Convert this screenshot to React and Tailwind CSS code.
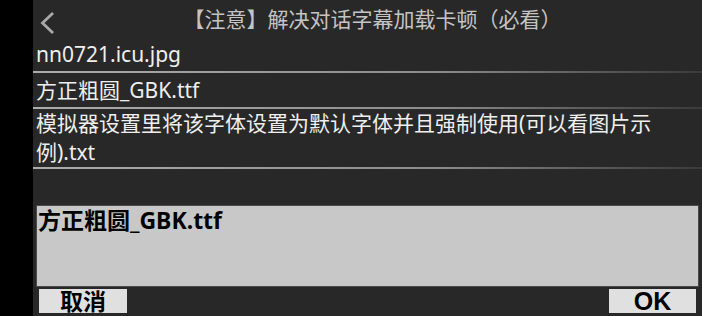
import React from "react";

function Divider() {
  return <div className="h-[2px] w-full bg-[linear-gradient(to_right,#acacac_0%,#8c8c8c_60%,#3a3a3a_100%)]" />;
}

export default function App() {
  return (
    <div className="flex w-[702px] h-[316px] bg-black overflow-hidden font-['Noto_Sans','Noto_Sans_CJK_SC',sans-serif]">
      <div className="w-[33px] shrink-0 bg-black" />
      <div className="flex flex-1 flex-col bg-[#282828]">
        <div className="relative flex h-[38px] items-center justify-center">
          <svg className="absolute left-[6px] top-[12px]" width="16" height="22" viewBox="0 0 16 22">
            <path d="M13 2 L3.5 11 L13 20" fill="none" stroke="#a9a9a9" strokeWidth="2.8" strokeLinecap="square" />
          </svg>
          <span className="pl-[10px] text-[21px] leading-none text-[#c4c4c4]">【注意】解决对话字幕加载卡顿（必看）</span>
        </div>
        <div className="flex h-[33px] items-center pl-[3px] text-[21px] leading-none text-[#efefef]">nn0721.icu.jpg</div>
        <Divider />
        <div className="flex h-[34px] items-center pl-[3px] text-[21px] leading-none text-[#efefef]">方正粗圆_GBK.ttf</div>
        <Divider />
        <div className="flex h-[58px] items-center pl-[3px] pr-[30px] text-[21px] leading-[29px] text-[#efefef]">
          模拟器设置里将该字体设置为默认字体并且强制使用(可以看图片示例).txt
        </div>
        <Divider />
        <div className="h-[36px]" />
        <div className="ml-[3px] mr-[3px] h-[82px] border border-[#4a4a4a] bg-[#c8c8c8] pl-[1px] pt-[1px]">
          <span className="text-[23px] font-bold leading-[26px] text-black">方正粗圆_GBK.ttf</span>
        </div>
        <div className="mt-[2px] flex justify-between pl-[6px] pr-[6px]">
          <div className="flex h-[24px] w-[88px] items-center justify-center bg-[#e0e0e0] text-[23px] font-bold leading-none text-black">取消</div>
          <div className="flex h-[24px] w-[87px] items-center justify-center bg-[#e0e0e0] text-[25px] font-bold leading-none text-black font-['Liberation_Sans',sans-serif]">OK</div>
        </div>
      </div>
    </div>
  );
}
